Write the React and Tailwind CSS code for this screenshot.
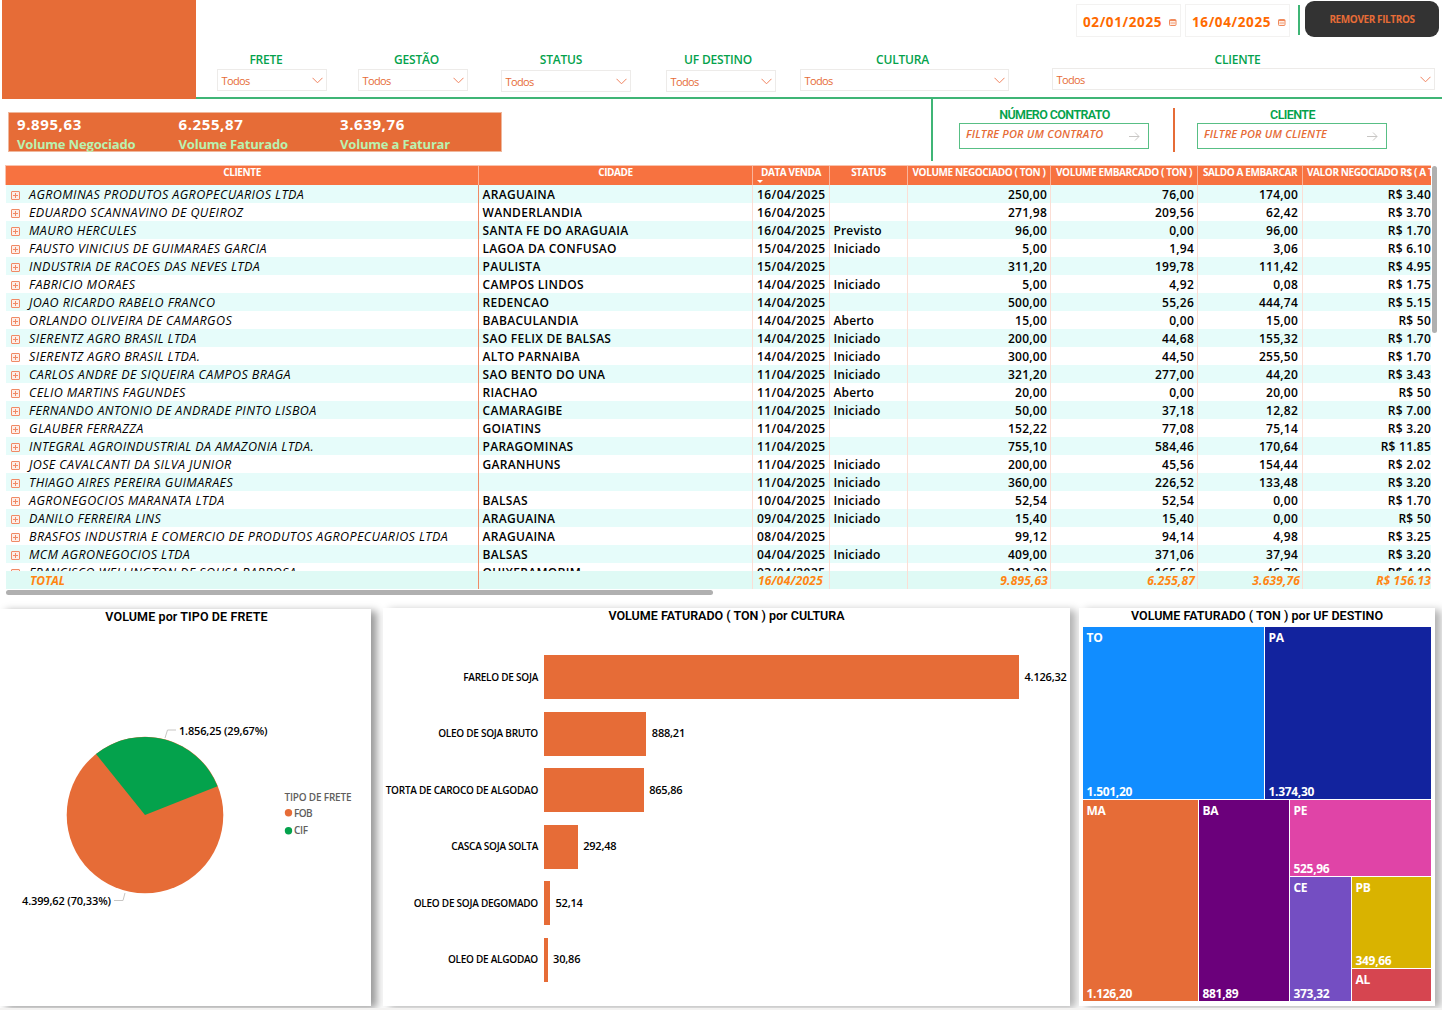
const filters = [
  { label: "FRETE", box: "ml-[21px] w-[110px]", center: "-left-[6px]", top: "mt-0" },
  { label: "GESTÃO", box: "ml-[31px] w-[110px]", center: "left-[3.5px]", top: "mt-0" },
  { label: "STATUS", box: "ml-[33px] w-[130px]", center: "-left-[5px]", top: "mt-px" },
  { label: "UF DESTINO", box: "ml-[35px] w-[110px]", center: "-left-[3px]", top: "mt-px" },
  { label: "CULTURA", box: "ml-[24px] w-[209px]", center: "-left-[2px]", top: "mt-0" },
  { label: "CLIENTE", box: "ml-[43px] w-[383px]", center: "-left-[6px]", top: "-mt-px" },
];

const kpis = [
  { value: "9.895,63", label: "Volume Negociado" },
  { value: "6.255,87", label: "Volume Faturado" },
  { value: "3.639,76", label: "Volume a Faturar" },
];

const rows = [
  ["AGROMINAS PRODUTOS AGROPECUARIOS LTDA", "ARAGUAINA", "16/04/2025", "", "250,00", "76,00", "174,00", "R$ 3.40"],
  ["EDUARDO SCANNAVINO DE QUEIROZ", "WANDERLANDIA", "16/04/2025", "", "271,98", "209,56", "62,42", "R$ 3.70"],
  ["MAURO HERCULES", "SANTA FE DO ARAGUAIA", "16/04/2025", "Previsto", "96,00", "0,00", "96,00", "R$ 1.70"],
  ["FAUSTO VINICIUS DE GUIMARAES GARCIA", "LAGOA DA CONFUSAO", "15/04/2025", "Iniciado", "5,00", "1,94", "3,06", "R$ 6.10"],
  ["INDUSTRIA DE RACOES DAS NEVES LTDA", "PAULISTA", "15/04/2025", "", "311,20", "199,78", "111,42", "R$ 4.95"],
  ["FABRICIO MORAES", "CAMPOS LINDOS", "14/04/2025", "Iniciado", "5,00", "4,92", "0,08", "R$ 1.75"],
  ["JOAO RICARDO RABELO FRANCO", "REDENCAO", "14/04/2025", "", "500,00", "55,26", "444,74", "R$ 5.15"],
  ["ORLANDO OLIVEIRA DE CAMARGOS", "BABACULANDIA", "14/04/2025", "Aberto", "15,00", "0,00", "15,00", "R$ 50"],
  ["SIERENTZ AGRO BRASIL LTDA", "SAO FELIX DE BALSAS", "14/04/2025", "Iniciado", "200,00", "44,68", "155,32", "R$ 1.70"],
  ["SIERENTZ AGRO BRASIL LTDA.", "ALTO PARNAIBA", "14/04/2025", "Iniciado", "300,00", "44,50", "255,50", "R$ 1.70"],
  ["CARLOS ANDRE DE SIQUEIRA CAMPOS BRAGA", "SAO BENTO DO UNA", "11/04/2025", "Iniciado", "321,20", "277,00", "44,20", "R$ 3.43"],
  ["CELIO MARTINS FAGUNDES", "RIACHAO", "11/04/2025", "Aberto", "20,00", "0,00", "20,00", "R$ 50"],
  ["FERNANDO ANTONIO DE ANDRADE PINTO LISBOA", "CAMARAGIBE", "11/04/2025", "Iniciado", "50,00", "37,18", "12,82", "R$ 7.00"],
  ["GLAUBER FERRAZZA", "GOIATINS", "11/04/2025", "", "152,22", "77,08", "75,14", "R$ 3.20"],
  ["INTEGRAL AGROINDUSTRIAL DA AMAZONIA LTDA.", "PARAGOMINAS", "11/04/2025", "", "755,10", "584,46", "170,64", "R$ 11.85"],
  ["JOSE CAVALCANTI DA SILVA JUNIOR", "GARANHUNS", "11/04/2025", "Iniciado", "200,00", "45,56", "154,44", "R$ 2.02"],
  ["THIAGO AIRES PEREIRA GUIMARAES", "", "11/04/2025", "Iniciado", "360,00", "226,52", "133,48", "R$ 3.20"],
  ["AGRONEGOCIOS MARANATA LTDA", "BALSAS", "10/04/2025", "Iniciado", "52,54", "52,54", "0,00", "R$ 1.70"],
  ["DANILO FERREIRA LINS", "ARAGUAINA", "09/04/2025", "Iniciado", "15,40", "15,40", "0,00", "R$ 50"],
  ["BRASFOS INDUSTRIA E COMERCIO DE PRODUTOS AGROPECUARIOS LTDA", "ARAGUAINA", "08/04/2025", "", "99,12", "94,14", "4,98", "R$ 3.25"],
  ["MCM AGRONEGOCIOS LTDA", "BALSAS", "04/04/2025", "Iniciado", "409,00", "371,06", "37,94", "R$ 3.20"],
  ["FRANCISCO WELLINGTON DE SOUSA BARBOSA", "QUIXERAMOBIM", "03/04/2025", "", "212,20", "165,50", "46,70", "R$ 4.10"],
];

const total = ["TOTAL", "", "16/04/2025", "", "9.895,63", "6.255,87", "3.639,76", "R$ 156.13"];

const cultures = [
  { label: "FARELO DE SOJA", value: "4.126,32", width: 475 },
  { label: "OLEO DE SOJA BRUTO", value: "888,21", width: 102.3 },
  { label: "TORTA DE CAROCO DE ALGODAO", value: "865,86", width: 99.7 },
  { label: "CASCA SOJA SOLTA", value: "292,48", width: 33.7 },
  { label: "OLEO DE SOJA DEGOMADO", value: "52,14", width: 6 },
  { label: "OLEO DE ALGODAO", value: "30,86", width: 3.6 },
];

const columns = "grid grid-cols-[473px_274px_77px_78px_143px_147px_105px_128px]";

function Chevron() {
  return (
    <svg className="h-[7px] w-[11px]" viewBox="0 0 11 7" fill="none" stroke="#f0835f" strokeWidth="1">
      <path d="M0.5 0.8L5.5 5.8L10.5 0.8" />
    </svg>
  );
}

function Calendar() {
  return (
    <svg className="mt-[3px] h-[7px] w-[8px]" viewBox="0 0 8 7" fill="none" stroke="#f08a5c">
      <rect x="0.5" y="0.5" width="6.5" height="6" rx="0.8" fill="#fdeee6" />
      <path d="M0.5 1.5H7" strokeWidth="1" />
      <path d="M1.500 4H6" strokeWidth="0.8" />
    </svg>
  );
}

function DateBox({ value }) {
  return (
    <div className="flex h-[33px] w-[105px] items-center border border-[#f3f2f1] pl-[6px] text-[13.5px] font-bold tracking-[0.62px] text-[#ff6a00]">
      <span className="w-[86px] pt-[3px] whitespace-nowrap">{value}</span>
      <Calendar />
    </div>
  );
}

function SearchBox({ label, placeholder }) {
  return (
    <div className="w-[190px]">
      <div className="text-center font-[Roboto] text-[12.5px] leading-[17px] font-semibold tracking-[-0.6px] text-[#04a24c]">
        <span className="pl-[2px]">{label}</span>
      </div>
      <div className="flex h-[26px] items-center justify-between border border-[#58bf85] pr-[8px] pl-[6.5px]">
        <span className="pb-[3px] text-[11px] font-semibold tracking-[0.17px] whitespace-nowrap text-[#e66c37] italic">{placeholder}</span>
        <svg className="h-[9px] w-[11px]" viewBox="0 0 11 9" fill="none" stroke="#c8c6c4">
          <path d="M0 4.5H10M6 0.5L10 4.5L6 8.5" />
        </svg>
      </div>
    </div>
  );
}

function Row({ cells, striped }) {
  return (
    <div className={`${columns} h-[18px] ${striped ? "bg-[#e6fcfa]" : "bg-white"}`}>
      <div className="flex items-center border-r border-[#f08a66] pl-[5px] whitespace-nowrap italic">
        <svg className="mt-[2px] mr-[9px] h-[9px] w-[9px] shrink-0" viewBox="0 0 9 9" fill="#fdeee8" stroke="#f08a66">
          <rect x="0.5" y="0.5" width="8" height="8" rx="0.5" />
          <path d="M2 4.5H7M4.5 2V7" />
        </svg>
        <span className="text-[12.5px] font-medium tracking-[0.4px]">{cells[0]}</span>
      </div>
      <div className="border-r border-[#fbded5] pl-[3.5px] tracking-[0.3px]">{cells[1]}</div>
      <div className="border-r border-[#fbded5] pl-[4px] tracking-[0.42px] whitespace-nowrap">{cells[2]}</div>
      <div className="border-r border-[#fbded5] pl-[3.5px] tracking-[0.15px]">{cells[3]}</div>
      <div className="border-r border-[#fbded5] pr-[3px] text-right">{cells[4]}</div>
      <div className="border-r border-[#fbded5] pr-[3px] text-right">{cells[5]}</div>
      <div className="border-r border-[#fbded5] pr-[4px] text-right">{cells[6]}</div>
      <div className="text-right whitespace-nowrap">{cells[7]}</div>
    </div>
  );
}

function Tile({ name, value, className }) {
  return (
    <div className={`flex min-h-0 min-w-0 flex-col justify-between overflow-hidden px-[3.5px] pt-[3px] text-[12px] leading-[15px] font-bold tracking-[-0.3px] text-white ${className}`}>
      <span>{name}</span>
      {value && <span>{value}</span>}
    </div>
  );
}

function ChartTitle({ children }) {
  return <h2 className="text-center font-[Roboto] text-[12.5px] leading-[16px] font-semibold whitespace-nowrap">{children}</h2>;
}

export default function App() {
  return (
    <div className="flex h-[1010px] w-[1442px] flex-col overflow-hidden bg-white font-['Open_Sans',sans-serif] text-black">
      {/* Header with filters */}
      <header className="flex h-[99px] shrink-0">
        <div className="ml-[2px] w-[194px] bg-[#e66c37]" />
        <div className="flex flex-1 flex-col border-b-2 border-[#3fb576]">
          <div className="flex h-[50px] justify-end">
            <div className="mt-[4px] flex gap-[4px]">
              <DateBox value="02/01/2025" />
              <DateBox value="16/04/2025" />
            </div>
            <div className="mt-[5px] ml-[8px] h-[30px] w-[2px] bg-[#3fb576]" />
            <button className="mt-[1px] mr-[3px] ml-[5px] h-[36px] w-[134px] rounded-[9px] bg-[#333333] text-[10px] font-bold tracking-[-0.4px] text-[#e66c37]">
              REMOVER FILTROS
            </button>
          </div>
          <div className="flex">
            {filters.map((f, i) => (
              <div key={i} className={`shrink-0 ${f.box}`}>
                <div className={`relative h-[19px] text-center text-[12px] leading-[19px] font-semibold tracking-[-0.2px] text-[#04a24c] ${f.center}`}>{f.label}</div>
                <div className={`flex h-[22px] items-center justify-between border border-[#edebe9] pr-[3.5px] pl-[3.5px] text-[11px] text-[#e66c37] ${f.top}`}>
                  <span className="pt-[2px] tracking-[-0.6px]">Todos</span>
                  <Chevron />
                </div>
              </div>
            ))}
          </div>
        </div>
      </header>

      {/* Totals and text search */}
      <section className="flex h-[66px] shrink-0">
        <div className="mt-[13px] ml-[8px] flex h-[40px] w-[494px] border border-[#efb79c] bg-[#e66c37]">
          {kpis.map((k) => (
            <div key={k.label} className="w-[161.5px] pl-[8px] font-bold whitespace-nowrap">
              <div className="pt-[1px] text-[15px] leading-[20px] tracking-[0.6px] text-white">{k.value}</div>
              <div className="text-[13px] leading-[20px] tracking-[-0.18px] text-[#b9f2b0]">{k.label}</div>
            </div>
          ))}
        </div>
        <div className="ml-[429px] h-[62px] w-[1.5px] bg-[#3fb576]" />
        <div className="mt-[7px] ml-[26px]">
          <SearchBox label="NÚMERO CONTRATO" placeholder="FILTRE POR UM CONTRATO" />
        </div>
        <div className="mt-[9px] ml-[24.5px] h-[44px] w-[1.5px] bg-[#e66c37]" />
        <div className="mt-[7px] ml-[22px]">
          <SearchBox label="CLIENTE" placeholder="FILTRE POR UM CLIENTE" />
        </div>
      </section>

      {/* Sales table */}
      <section className="ml-[5px] flex h-[424px] shrink-0">
        <div className="flex w-[1426px] flex-col overflow-hidden text-[12px] leading-[19px] font-semibold tracking-[0.25px]">
          <div className={`${columns} h-[20px] shrink-0 divide-x divide-[#f9b49b] border-t border-l border-[#f9c3ae] bg-[#f77240] text-center text-[10px] leading-[13px] font-bold tracking-[-0.4px] whitespace-nowrap text-white`}>
            <div>CLIENTE</div>
            <div>CIDADE</div>
            <div className="relative">
              DATA VENDA
              <span className="absolute bottom-[2px] left-[4px] border-x-[3.5px] border-t-[3px] border-x-transparent border-t-white" />
            </div>
            <div>STATUS</div>
            <div>VOLUME NEGOCIADO ( TON )</div>
            <div>VOLUME EMBARCADO ( TON )</div>
            <div>SALDO A EMBARCAR</div>
            <div className="overflow-hidden pl-[4px] text-left">VALOR NEGOCIADO R$ ( A TON )</div>
          </div>
          <div className="ml-px h-[386px] overflow-hidden">
            {rows.map((cells, i) => (
              <Row key={i} cells={cells} striped={i % 2 === 0} />
            ))}
          </div>
          <div className={`${columns} ml-px h-[18px] shrink-0 bg-[#dffaf5] font-bold text-[#ff8512] italic`}>
            <div className="border-r border-[#f08a66] pl-[24px] tracking-[-0.1px]">{total[0]}</div>
            {total.slice(1, 4).map((cell, i) => (
              <div key={i} className="border-r border-[#fbded5] pl-[5px] tracking-[0.2px]">{cell}</div>
            ))}
            {total.slice(4, 7).map((cell, i) => (
              <div key={i} className="border-r border-[#fbded5] pr-[2px] text-right tracking-[0.15px]">{cell}</div>
            ))}
            <div className="text-right tracking-[0.15px] whitespace-nowrap">{total[7]}</div>
          </div>
        </div>
        <div className="mt-[1px] ml-[1px] h-[167px] w-[5px] rounded-full bg-[#b0b0b0]" />
      </section>
      <div className="mt-[1px] ml-[6px] h-[5px] w-[707px] shrink-0 rounded-full bg-[#b0b0b0]" />

      {/* Charts */}
      <section className="mt-[13px] flex h-[398px] shrink-0">
        <div className="mt-px h-[397px] w-[371px] bg-white shadow-[6px_2px_8px_0px_rgba(0,0,0,0.4)]">
          <div className="pl-[2px] tracking-[0.1px]">
            <ChartTitle>VOLUME por TIPO DE FRETE</ChartTitle>
          </div>
          <svg className="block h-[380px] w-[371px]" viewBox="0 625 371 380" fontFamily="Open Sans" fontWeight="600">
            <circle cx="145" cy="815" r="78.3" fill="#e66c37" />
            <path d="M145 815L96 754A78.3 78.3 0 0 1 217.5 786.2Z" fill="#04a24c" />
            <path d="M165 738L167.500 730H176M125 893L123 900.500H114" fill="none" stroke="#c8c6c4" />
            <text x="179" y="735" fontSize="11" textLength="88.500">1.856,25 (29,67%)</text>
            <text x="22" y="905" fontSize="11" textLength="89">4.399,62 (70,33%)</text>
            <g fontSize="10" fill="#605e5c">
              <text x="284.500" y="801" textLength="67">TIPO DE FRETE</text>
              <text x="294" y="816.500" textLength="18.500">FOB</text>
              <text x="294" y="834" textLength="14">CIF</text>
            </g>
            <circle cx="288.500" cy="812.700" r="3.700" fill="#e66c37" />
            <circle cx="288.500" cy="830.700" r="3.700" fill="#04a24c" />
          </svg>
        </div>

        <div className="ml-[12px] w-[687px] bg-white shadow-[6px_2px_8px_0px_rgba(0,0,0,0.3)]">
          <ChartTitle>VOLUME FATURADO ( TON ) por CULTURA</ChartTitle>
          <div className="mt-[31px] flex flex-col gap-[12.5px]">
            {cultures.map((c) => (
              <div key={c.label} className="flex h-[44px] items-center whitespace-nowrap">
                <div className="mr-[6px] w-[155px] text-right text-[10px] font-semibold tracking-[-0.25px]">{c.label}</div>
                <div className="h-full shrink-0 bg-[#e66c37]" style={{ width: c.width }} />
                <div className="ml-[5.5px] text-[11px] font-semibold tracking-[-0.2px]">{c.value}</div>
              </div>
            ))}
          </div>
        </div>

        <div className="ml-[9px] w-[356px] bg-white shadow-[6px_2px_8px_0px_rgba(0,0,0,0.3)]">
          <ChartTitle>VOLUME FATURADO ( TON ) por UF DESTINO</ChartTitle>
          <div className="mt-[3px] ml-[4px] flex h-[374px] w-[347.5px] flex-col gap-px">
            <div className="flex h-[172px] gap-px">
              <Tile name="TO" value="1.501,20" className="w-[181px] bg-[#118dff]" />
              <Tile name="PA" value="1.374,30" className="flex-1 bg-[#12239e]" />
            </div>
            <div className="flex flex-1 gap-px">
              <Tile name="MA" value="1.126,20" className="w-[115px] bg-[#e66c37]" />
              <Tile name="BA" value="881,89" className="w-[90px] bg-[#6b007b]" />
              <div className="flex flex-1 flex-col gap-px">
                <Tile name="PE" value="525,96" className="h-[76px] bg-[#e044a7]" />
                <div className="flex flex-1 gap-px">
                  <Tile name="CE" value="373,32" className="w-[61px] bg-[#744ec2]" />
                  <div className="flex flex-1 flex-col gap-px">
                    <Tile name="PB" value="349,66" className="h-[91px] bg-[#d9b300]" />
                    <Tile name="AL" className="flex-1 bg-[#d64550]" />
                  </div>
                </div>
              </div>
            </div>
          </div>
        </div>
      </section>
      <footer className="mt-[2px] h-[2px] bg-[#f3f2f1]" />
    </div>
  );
}
